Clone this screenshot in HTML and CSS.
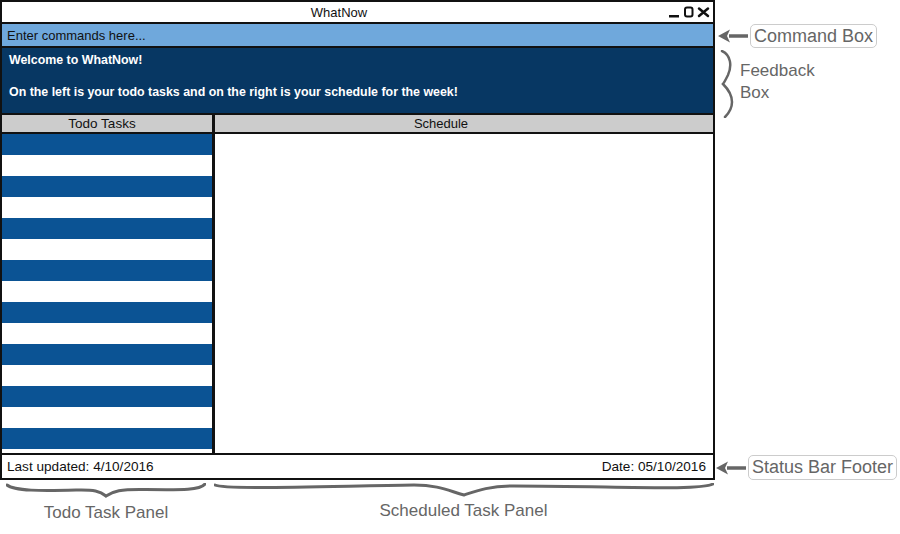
FILE: index.html
```html
<!DOCTYPE html>
<html>
<head>
<meta charset="utf-8">
<link rel="stylesheet" href="styles.css">
</head>
<body>
<div class="page">
  <div class="main">
    <div class="window">
      <div class="titlebar">
        <div class="title">WhatNow</div>
        <svg class="controls" width="44" height="14" viewBox="0 0 44 14">
          <rect x="1" y="10" width="10" height="2.5" fill="#111"/>
          <rect x="17" y="2.5" width="7.5" height="9" rx="2" fill="none" stroke="#111" stroke-width="2"/>
          <path d="M31 3.5 L40 11 M40 3.5 L31 11" stroke="#111" stroke-width="2.5" stroke-linecap="round"/>
        </svg>
      </div>
      <div class="cmdbox">Enter commands here...</div>
      <div class="feedback">
        <p>Welcome to WhatNow!</p>
        <p>On the left is your todo tasks and on the right is your schedule for the week!</p>
      </div>
      <div class="panels">
        <div class="todo">
          <div class="phead thead">Todo Tasks</div>
          <div class="stripes">
            <div class="row b"></div><div class="row"></div>
            <div class="row b"></div><div class="row"></div>
            <div class="row b"></div><div class="row"></div>
            <div class="row b"></div><div class="row"></div>
            <div class="row b"></div><div class="row"></div>
            <div class="row b"></div><div class="row"></div>
            <div class="row b"></div><div class="row"></div>
            <div class="row b"></div>
          </div>
        </div>
        <div class="sched">
          <div class="phead shead">Schedule</div>
          <div class="sbody"></div>
        </div>
      </div>
      <div class="footer">
        <span>Last updated: 4/10/2016</span>
        <span>Date: 05/10/2016</span>
      </div>
    </div>
    <div class="bottom">
      <div class="bnote todo-note">
        <svg class="hbrace" width="200" height="16" viewBox="0 0 200 16">
          <path d="M1 2 C8 8 35 8 70 7 C88 6.5 94 8 100 13 C107 8 114 6 140 6.5 C178 7 194 7 199 1" fill="none" stroke="#666" stroke-width="3" stroke-linecap="round"/>
        </svg>
        <div class="blabel">Todo Task Panel</div>
      </div>
      <div class="bnote sched-note">
        <svg class="hbrace" width="500" height="16" viewBox="0 0 500 16">
          <path d="M1 2 C10 7 120 3 200 2 C225 2 235 8 250 12 C262 8 275 3 300 3 C400 3 485 8 499 1" fill="none" stroke="#666" stroke-width="3" stroke-linecap="round"/>
        </svg>
        <div class="blabel">Scheduled Task Panel</div>
      </div>
    </div>
  </div>
  <div class="side">
    <div class="callout cmd-callout">
      <svg class="arrow" width="32" height="16" viewBox="0 0 32 16">
        <path d="M12 8 L31 8" stroke="#666" stroke-width="3.5"/>
        <path d="M1 8 L13 1.5 L10 8 L13 14.5 Z" fill="#666"/>
      </svg>
      <div class="nbox">Command Box</div>
    </div>
    <div class="brace-note">
      <svg class="vbrace" width="16" height="68" viewBox="0 0 16 68">
        <path d="M2 1 C11 5 12 16 8 25 C5 31 4 33 3 34 C7 38 12 45 12 52 C12 60 8 64 5 67" fill="none" stroke="#666" stroke-width="2.5" stroke-linecap="round"/>
      </svg>
      <div class="ntext">Feedback<br>Box</div>
    </div>
    <div class="callout status-callout">
      <svg class="arrow" width="32" height="16" viewBox="0 0 32 16">
        <path d="M12 8 L31 8" stroke="#666" stroke-width="3.5"/>
        <path d="M1 8 L13 1.5 L10 8 L13 14.5 Z" fill="#666"/>
      </svg>
      <div class="nbox">Status Bar Footer</div>
    </div>
  </div>
</div>
</body>
</html>
```

FILE: styles.css
```css
* { box-sizing: border-box; }
html, body { margin: 0; padding: 0; background: #fff; }
body { font-family: "Liberation Sans", Arial, sans-serif; color: #111; width: 900px; height: 534px; overflow: hidden; }

.page { display: flex; }
.main { width: 715px; display: flex; flex-direction: column; }

.window {
  width: 715px;
  height: 480px;
  border: 2px solid #111;
  display: flex;
  flex-direction: column;
}
.titlebar {
  height: 22px;
  border-bottom: 2px solid #111;
  display: flex;
  align-items: center;
}
.title { flex: 1; text-align: center; font-size: 13px; padding-left: 8px; }
.controls { margin-right: 1px; }

.cmdbox {
  height: 24px;
  background: #6fa8dc;
  border-bottom: 2px solid #111;
  font-size: 13px;
  padding: 4px 0 0 5px;
}
.feedback {
  height: 67px;
  background: #073763;
  border-bottom: 2px solid #111;
  color: #fff;
  font-weight: bold;
  font-size: 12.4px;
  padding: 5px 0 0 7px;
}
.feedback p { margin: 0 0 18px 0; line-height: 14px; }

.panels { flex: 1; display: flex; }
.todo { width: 212px; border-right: 2px solid #111; display: flex; flex-direction: column; }
.sched { flex: 1; border-left: 1px solid #111; display: flex; flex-direction: column; }
.phead {
  height: 19px;
  background: #cccccc;
  border-bottom: 2px solid #111;
  font-size: 13px;
  text-align: center;
  line-height: 17px;
}
.thead { padding-right: 10px; font-size: 13.5px; }
.shead { padding-right: 46px; }
.stripes { flex: 1; }
.row { height: 21px; }
.row.b { background: #0b5394; }
.sbody { flex: 1; }

.footer {
  height: 25px;
  border-top: 2px solid #111;
  display: flex;
  justify-content: space-between;
  align-items: center;
  font-size: 13.6px;
  padding: 0 7px 0 5px;
}

.bottom { display: flex; margin-top: 3px; }
.bnote { display: flex; flex-direction: column; }
.todo-note { width: 212px; }
.todo-note .hbrace { margin-left: 6px; }
.sched-note { width: 503px; }
.sched-note .hbrace { margin-left: 2px; }
.blabel {
  text-align: center;
  font-size: 17px;
  color: #666;
  margin-top: 3px;
  line-height: 22px;
}
.sched-note .blabel { margin-top: 1px; }

.side { width: 185px; height: 482px; display: flex; flex-direction: column; }
.callout { display: flex; align-items: center; height: 24px; }
.cmd-callout { margin-top: 24px; }
.cmd-callout .arrow { margin-left: 2px; }
.status-callout { margin-top: auto; margin-bottom: 2px; height: 25px; }
.status-callout .arrow { margin-left: 0; }
.nbox {
  border: 1px solid #ccc;
  border-radius: 5px;
  font-size: 18px;
  color: #666;
  padding: 0 3px;
  height: 100%;
  line-height: 22px;
  margin-left: 1px;
}
.brace-note { display: flex; margin-top: 2px; }
.vbrace { margin-left: 5px; }
.ntext {
  font-size: 17px;
  color: #666;
  line-height: 22px;
  margin-left: 4px;
  padding-top: 10px;
}
```
